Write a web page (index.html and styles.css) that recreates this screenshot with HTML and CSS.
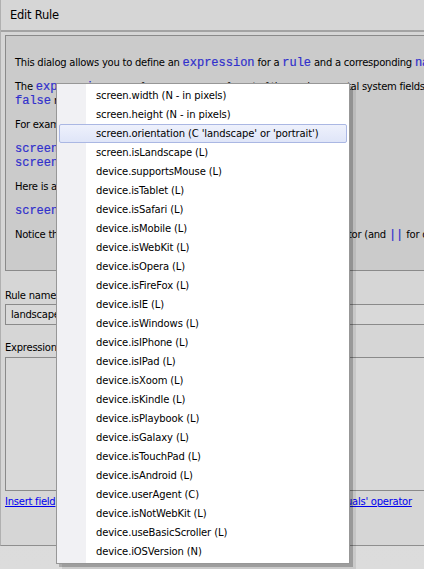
FILE: index.html
```html
<!DOCTYPE html>
<html>
<head>
<meta charset="utf-8">
<link rel="stylesheet" href="styles.css">
</head>
<body>
<div class="dialog">
  <div class="title">Edit Rule</div>
  <div class="panel">
    <p>This dialog allows you to define an <code>expression</code> for a <code>rule</code> and a corresponding <code>name</code> for it.</p>
    <p>The <code>expression</code> can reference any one of a set of the environmental system fields that will evaluate to <code>true</code> or<br><code>false</code> results at runtime.</p>
    <p>For example:</p>
    <p><code>screen.orientation == 'landscape'</code><br><code>screen.width &gt; 800</code></p>
    <p>Here is a more complex example:</p>
    <p><code>screen.isLandscape &amp;&amp; device.isTablet</code></p>
    <p>Notice that the expressions can use the standard JavaScript <code>&amp;&amp;</code> operator (and <code>||</code> for or).</p>
  </div>
  <div class="form">
    <label class="lbl">Rule name</label>
    <div class="input">landscape</div>
    <label class="lbl lbl-exp">Expression</label>
    <div class="textarea"></div>
    <div class="links"><a href="#">Insert field</a><a href="#">Insert 'and' operator</a><a href="#">Insert 'or' operator</a><a href="#">Insert 'equals' operator</a></div>
  </div>
</div>
<ul class="menu">
  <li>screen.width (N - in pixels)</li>
  <li>screen.height (N - in pixels)</li>
  <li class="hl">screen.orientation (C 'landscape' or 'portrait')</li>
  <li>screen.isLandscape (L)</li>
  <li>device.supportsMouse (L)</li>
  <li>device.isTablet (L)</li>
  <li>device.isSafari (L)</li>
  <li>device.isMobile (L)</li>
  <li>device.isWebKit (L)</li>
  <li>device.isOpera (L)</li>
  <li>device.isFireFox (L)</li>
  <li>device.isIE (L)</li>
  <li>device.isWindows (L)</li>
  <li>device.isIPhone (L)</li>
  <li>device.isIPad (L)</li>
  <li>device.isXoom (L)</li>
  <li>device.isKindle (L)</li>
  <li>device.isPlaybook (L)</li>
  <li>device.isGalaxy (L)</li>
  <li>device.isTouchPad (L)</li>
  <li>device.isAndroid (L)</li>
  <li>device.userAgent (C)</li>
  <li>device.isNotWebKit (L)</li>
  <li>device.useBasicScroller (L)</li>
  <li>device.iOSVersion (N)</li>
</ul>
</body>
</html>
```
FILE: styles.css
```css
html, body {
  margin: 0;
  padding: 0;
}
body {
  width: 424px;
  height: 569px;
  overflow: hidden;
  position: relative;
  background: linear-gradient(#c4c4c4, #d8d8d8 12px, #dcdcdc);
  font-family: "DejaVu Sans", sans-serif;
  font-size: 10px;
  letter-spacing: -0.25px;
  color: #000;
}
.dialog {
  width: 640px;
  height: 546px;
  box-sizing: border-box;
  background: #d6d6d6;
  border-bottom: 1px solid #8f8f8f;
  border-left: 1px solid #b0b0b0;
}
.title {
  height: 30px;
  line-height: 30px;
  padding-left: 9px;
  font-size: 11.5px;
  border-bottom: 2px solid #a3a3a3;
}
.panel {
  margin: 3px 0 0 4px;
  height: 236px;
  box-sizing: border-box;
  border: 1px solid #8a8a8a;
  background: #cbcbcb;
  padding: 20px 9px 0;
  white-space: nowrap;
}
.panel p {
  margin: 0 0 10px;
  line-height: 14px;
}
code {
  font-family: "Liberation Mono", monospace;
  font-size: 12px;
  letter-spacing: 0;
  color: #3030cc;
  -webkit-text-stroke: 0.2px #3030cc;
}
.form {
  padding: 18px 0 0 4px;
}
.lbl {
  display: block;
  line-height: 14px;
}
.input {
  margin-top: 1px;
  height: 21px;
  box-sizing: border-box;
  border: 1px solid #8a8a8a;
  background: #d9d9d9;
  padding: 3px 5px;
  line-height: 14px;
}
.lbl-exp {
  margin-top: 16px;
}
.textarea {
  margin-top: 2px;
  height: 134px;
  box-sizing: border-box;
  border: 1px solid #8a8a8a;
  background: #d9d9d9;
}
.links {
  margin-top: 4px;
  line-height: 14px;
  display: flex;
  gap: 20px;
  white-space: nowrap;
}
.links a {
  color: #0000ee;
}
.menu {
  position: absolute;
  left: 56px;
  top: 83px;
  width: 294px;
  margin: 0;
  padding: 2px;
  list-style: none;
  letter-spacing: -0.12px;
  background: linear-gradient(to right, #f1f1f4 0, #f1f1f4 29px, #fff 29px);
  border: 1px solid #979797;
  box-shadow: 3px 3px 0 rgba(0,0,0,0.22), 6px 6px 0 rgba(0,0,0,0.08);
  box-sizing: border-box;
}
.menu li {
  height: 19px;
  line-height: 19px;
  padding-left: 37px;
  font-size: 10px;
  box-sizing: border-box;
  white-space: nowrap;
}
.menu li.hl {
  border: 1px solid #aab7e3;
  border-radius: 2px;
  background: linear-gradient(#eef1fc, #dfe5f8);
  line-height: 17px;
  padding-left: 36px;
}
```
